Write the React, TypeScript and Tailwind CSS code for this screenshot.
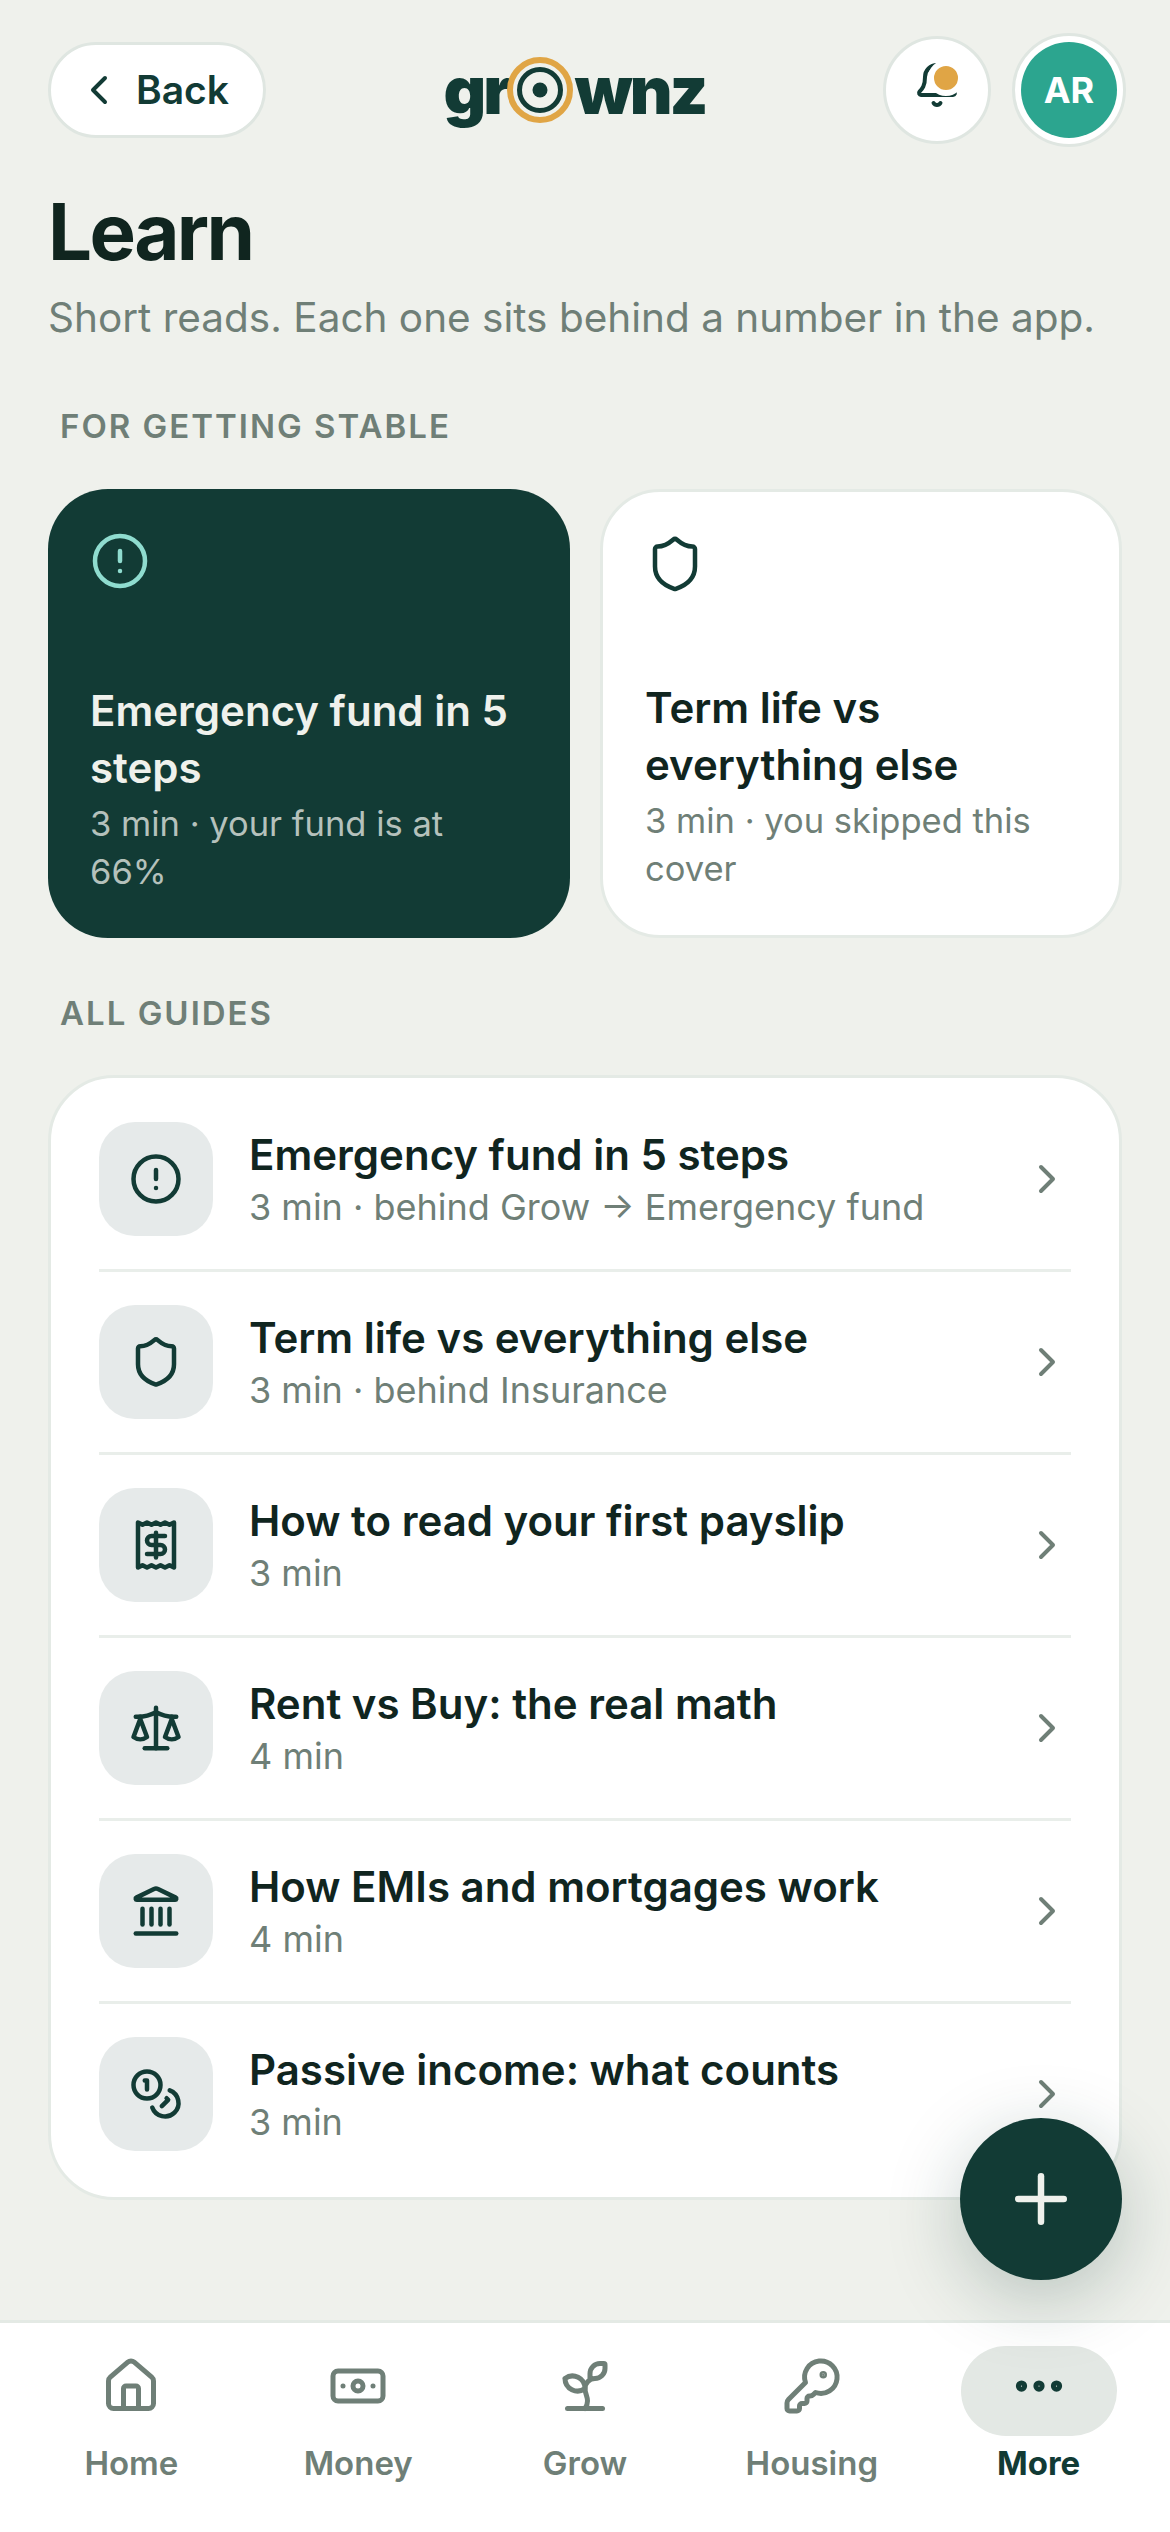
import React from 'react';
import {
  Bell,
  ChevronLeft,
  ChevronRight,
  CircleAlert,
  Coins,
  Ellipsis,
  Banknote,
  House,
  KeyRound,
  Landmark,
  Plus,
  Receipt,
  Scale,
  Shield,
  Sprout,
} from 'lucide-react';

const guides = [
  { icon: CircleAlert, title: 'Emergency fund in 5 steps', meta: '3 min · behind Grow → Emergency fund' },
  { icon: Shield, title: 'Term life vs everything else', meta: '3 min · behind Insurance' },
  { icon: Receipt, title: 'How to read your first payslip', meta: '3 min' },
  { icon: Scale, title: 'Rent vs Buy: the real math', meta: '4 min' },
  { icon: Landmark, title: 'How EMIs and mortgages work', meta: '4 min' },
  { icon: Coins, title: 'Passive income: what counts', meta: '3 min' },
];

const tabs = [
  { icon: House, label: 'Home' },
  { icon: Banknote, label: 'Money' },
  { icon: Sprout, label: 'Grow' },
  { icon: KeyRound, label: 'Housing' },
];

const Logo: React.FC = () => (
  <div className="flex items-center text-[66px] leading-none font-black tracking-[-3px] text-[#123b35] font-['Inter',sans-serif]">
    <span>gr</span>
    <svg width="66" height="66" viewBox="0 0 66 66" className="ml-[-2px] mr-[2px]">
      <circle cx="33" cy="33" r="30" fill="none" stroke="#e0a545" strokeWidth="6" />
      <circle cx="33" cy="33" r="20.5" fill="none" stroke="#123b35" strokeWidth="5" />
      <circle cx="33" cy="33" r="7.5" fill="#123b35" />
    </svg>
    <span>wnz</span>
  </div>
);

export default function App() {
  return (
    <div className="relative flex h-[2532px] w-[1170px] flex-col overflow-hidden bg-[#eff1ec] font-['Inter',sans-serif]">
      <main className="flex-1 px-[48px] pt-[36px]">
        <header className="mr-[-4px] flex h-[108px] items-center justify-between">
          <button className="flex h-[96px] items-center gap-[13px] rounded-full border-[3px] border-[#dfe6e1] bg-white pr-[34px] pl-[24px] text-[39px] font-semibold text-[#123b35]">
            <ChevronLeft size={48} strokeWidth={2} />
            <span>Back</span>
          </button>
          <Logo />
          <div className="flex items-center gap-[21px]">
            <div className="relative flex size-[108px] items-center justify-center rounded-full border-[3px] border-[#dfe6e1] bg-white text-[#123b35]">
              <Bell size={48} strokeWidth={2} className="mb-[10px]" />
              <span className="absolute top-[21px] right-[24px] size-[36px] rounded-full border-[6px] border-white bg-[#e0a545]" />
            </div>
            <div className="flex size-[114px] items-center justify-center rounded-full border-[3px] border-[#dfe6e1] bg-white p-[6px]">
              <div className="flex size-full items-center justify-center rounded-full bg-[#2ca58f] text-[36px] font-bold text-white">
                AR
              </div>
            </div>
          </div>
        </header>

        <h1 className="mt-[43px] text-[78px] leading-[90px] font-bold tracking-[-2.6px] text-[#10251f]">Learn</h1>
        <p className="mt-[11px] text-[40.5px] leading-[60px] text-[#6f7f77]">
          Short reads. Each one sits behind a number in the app.
        </p>

        <h2 className="mt-[54px] ml-[12px] text-[33px] leading-[48px] font-semibold tracking-[2px] text-[#6f7f77]">
          FOR GETTING STABLE
        </h2>

        <div className="mt-[39px] grid grid-cols-2 gap-[30px]">
          <div className="flex h-[449px] flex-col justify-end rounded-[60px] bg-[#123b35] px-[42px] pb-[42px]">
            <CircleAlert size={60} strokeWidth={1.8} className="mt-[42px] mb-auto text-[#8fdccf]" />
            <h3 className="text-[42px] leading-[57px] font-semibold text-[#eff1ec]">Emergency fund in 5 steps</h3>
            <p className="mt-[4px] text-[34.5px] leading-[48px] text-[#b5c1bc]">3 min · your fund is at 66%</p>
          </div>
          <div className="flex h-[449px] flex-col justify-end rounded-[60px] border-[3px] border-[#e4eae5] bg-white px-[42px] pb-[42px]">
            <Shield size={60} strokeWidth={1.8} className="mt-[42px] mb-auto text-[#123b35]" />
            <h3 className="text-[42px] leading-[57px] font-semibold text-[#10251f]">Term life vs everything else</h3>
            <p className="mt-[4px] text-[34.5px] leading-[48px] text-[#6f7f77]">3 min · you skipped this cover</p>
          </div>
        </div>

        <h2 className="mt-[51px] ml-[12px] text-[33px] leading-[48px] font-semibold tracking-[2px] text-[#6f7f77]">
          ALL GUIDES
        </h2>

        <section className="mt-[38px] rounded-[66px] border-[3px] border-[#e4eae5] bg-white px-[48px] pt-[11px] pb-[10px]">
          {guides.map((g, i) => (
            <div
              key={g.title}
              className={`flex h-[183px] items-center border-b-[3px] ${i < guides.length - 1 ? 'border-[#e9eeea]' : 'border-transparent'}`}
            >
              <div className="flex size-[114px] shrink-0 items-center justify-center rounded-[36px] bg-[#e6eaea] text-[#123b35]">
                <g.icon size={54} strokeWidth={2} />
              </div>
              <div className="mt-[3px] ml-[36px] flex-1">
                <div className="text-[42px] leading-[54px] font-semibold text-[#10251f]">{g.title}</div>
                <div className="text-[36px] leading-[51px] text-[#6f7f77]">{g.meta}</div>
              </div>
              <ChevronRight size={48} strokeWidth={2} className="text-[#6f7f77]" />
            </div>
          ))}
        </section>
      </main>

      <button className="absolute top-[2118px] left-[960px] flex size-[162px] items-center justify-center rounded-full bg-[#123b35] text-[#eff1ec] shadow-[0_18px_72px_rgba(18,59,53,0.25)]">
        <Plus size={78} strokeWidth={2} />
      </button>

      <nav className="flex h-[212px] items-start border-t-[3px] border-[#e4eae5] bg-white px-[18px] pt-[23px]">
        {tabs.map((t) => (
          <div key={t.label} className="flex flex-1 flex-col items-center text-[#6f7f77]">
            <div className="flex h-[90px] items-start justify-center pt-[10px]">
              <t.icon size={60} strokeWidth={2} />
            </div>
            <span className="mt-[3px] text-[33px] leading-[48px] font-semibold">{t.label}</span>
          </div>
        ))}
        <div className="flex flex-1 flex-col items-center text-[#123b35]">
          <div className="flex h-[90px] w-[156px] items-start justify-center rounded-[45px] bg-[#e3e8e4] pt-[10px]">
            <Ellipsis size={60} strokeWidth={2.5} />
          </div>
          <span className="mt-[3px] text-[33px] leading-[48px] font-bold">More</span>
        </div>
      </nav>
    </div>
  );
}
